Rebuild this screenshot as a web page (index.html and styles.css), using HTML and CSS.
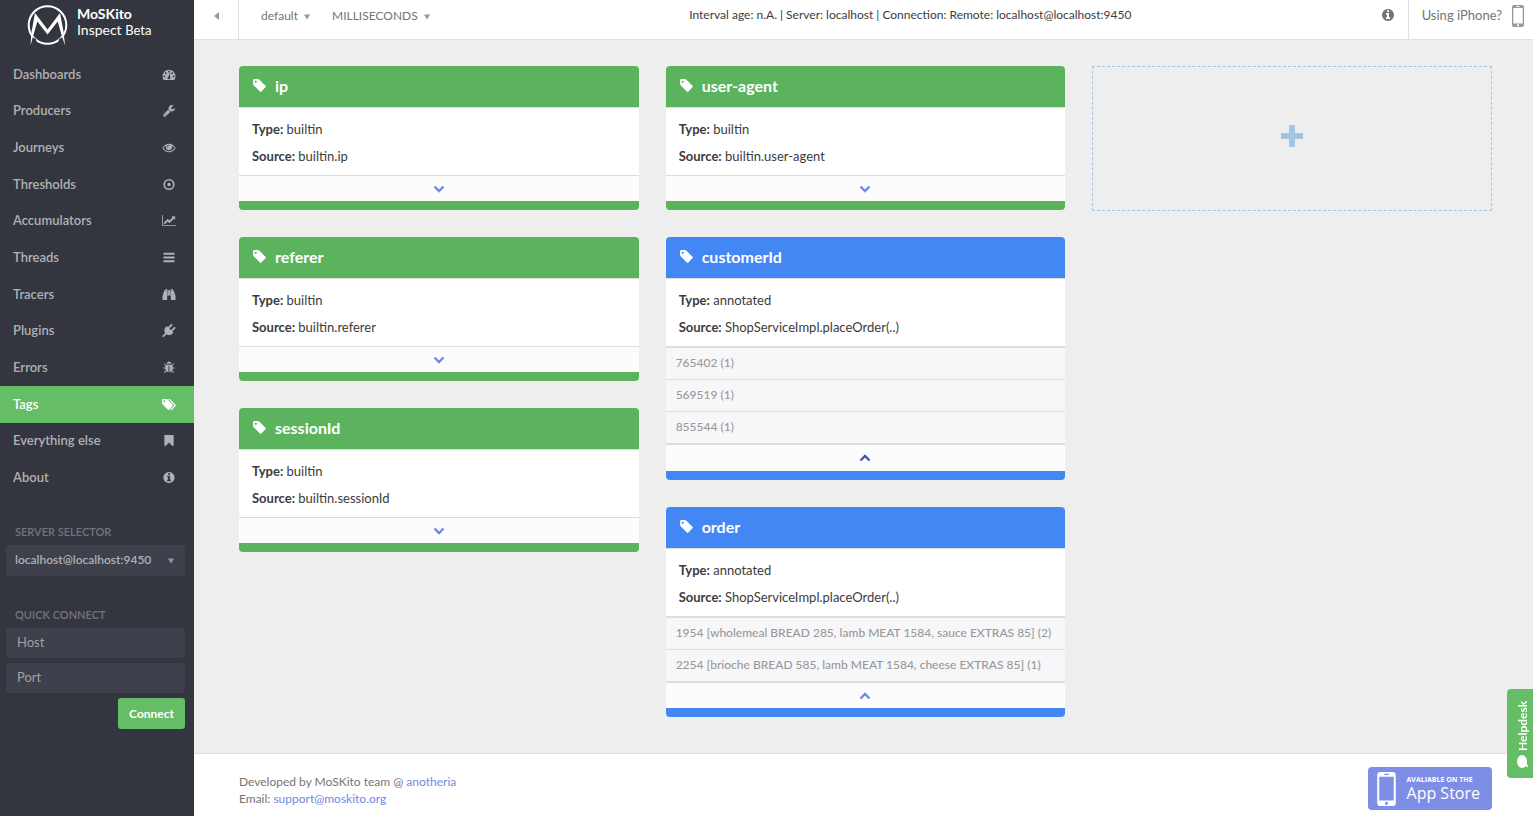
FILE: index.html
```html
<!DOCTYPE html>
<html lang="en">
<head>
<meta charset="utf-8">
<title>MoSKito Inspect</title>
<link rel="stylesheet" href="styles.css">
</head>
<body>
<svg class="sprite" aria-hidden="true">
  <symbol id="i-tag" viewBox="0 0 1792 1792"><path d="M576 448q0-53-37.500-90.500t-90.500-37.500-90.500 37.500-37.500 90.500 37.500 90.500 90.500 37.500 90.500-37.500 37.500-90.500zm1067 576q0 53-37 90l-491 492q-39 37-91 37-53 0-90-37l-715-716q-38-37-64.500-101t-26.500-117v-416q0-52 38-90t90-38h416q53 0 117 26.500t102 64.500l715 714q37 39 37 91z"/></symbol>
  <symbol id="i-tags" viewBox="0 0 1920 1792"><path d="M448 448q0-53-37.500-90.500t-90.500-37.500-90.500 37.500-37.500 90.500 37.500 90.500 90.500 37.500 90.500-37.500 37.500-90.500zm1067 576q0 53-37 90l-491 492q-39 37-91 37-53 0-90-37l-715-716q-38-37-64.500-101t-26.500-117v-416q0-52 38-90t90-38h416q53 0 117 26.500t102 64.500l715 714q37 39 37 91zm384 0q0 53-37 90l-491 492q-39 37-91 37-36 0-59-14t-53-45l470-470q37-37 37-90 0-52-37-91l-715-714q-38-38-102-64.500t-117-26.500h224q53 0 117 26.500t102 64.500l715 714q37 39 37 91z"/></symbol>
  <symbol id="i-info" viewBox="0 0 1792 1792"><path d="M1152 1376v-160q0-14-9-23t-23-9h-96v-512q0-14-9-23t-23-9h-320q-14 0-23 9t-9 23v160q0 14 9 23t23 9h96v320h-96q-14 0-23 9t-9 23v160q0 14 9 23t23 9h448q14 0 23-9t9-23zm-128-896v-160q0-14-9-23t-23-9h-192q-14 0-23 9t-9 23v160q0 14 9 23t23 9h192q14 0 23-9t9-23zm640 416q0 209-103 385.500t-279.500 279.500-385.500 103-385.500-103-279.500-279.500-103-385.500 103-385.500 279.500-279.500 385.500-103 385.500 103 279.500 279.500 103 385.500z"/></symbol>
  <symbol id="i-bookmark" viewBox="0 0 1792 1792"><path d="M1420 128q23 0 44 9 33 13 52.500 41t19.500 62v1289q0 34-19.500 62t-52.500 41q-19 8-44 8-48 0-83-32l-441-424-441 424q-36 33-83 33-23 0-44-9-33-13-52.500-41t-19.500-62v-1289q0-34 19.500-62t52.500-41q21-9 44-9h1048z"/></symbol>
  <symbol id="i-eye" viewBox="0 0 1792 1792"><path d="M1664 960q-152-236-381-353 61 104 61 225 0 185-131.500 316.500t-316.500 131.500-316.500-131.500-131.500-316.500q0-121 61-225-229 117-381 353 133 205 333.500 326.500t434.500 121.500 434.500-121.500 333.500-326.500zm-720-384q0-20-14-34t-34-14q-125 0-214.500 89.500t-89.500 214.500q0 20 14 34t34 14 34-14 14-34q0-86 61-147t147-61q20 0 34-14t14-34zm848 384q0 34-20 69-140 230-376.500 368.500t-499.500 138.500-499.500-139-376.500-368q-20-35-20-69t20-69q140-229 376.500-368t499.500-139 499.500 139 376.500 368q20 35 20 69z"/></symbol>
  <symbol id="i-dot" viewBox="0 0 1792 1792"><circle cx="896" cy="896" r="656" fill="none" stroke="currentColor" stroke-width="224"/><circle cx="896" cy="896" r="230"/></symbol>
  <symbol id="i-chart" viewBox="0 0 2048 1792"><path d="M2048 1536v128h-2048v-1536h128v1408h1920zm-128-1248v435q0 21-19.500 29.500t-35.500-7.500l-121-121-633 633q-10 10-23 10t-23-10l-233-233-416 416-192-192 585-585q10-10 23-10t23 10l233 233 464-464-121-121q-16-16-7.500-35.500t29.500-19.500h435q14 0 23 9t9 23z"/></symbol>
  <symbol id="i-bars" viewBox="0 0 1792 1792"><rect x="128" y="256" width="1536" height="256" rx="50"/><rect x="128" y="768" width="1536" height="256" rx="50"/><rect x="128" y="1280" width="1536" height="256" rx="50"/></symbol>
  <symbol id="i-binoculars" viewBox="0 0 1792 1792"><path d="M704 320v768q0 26-19 45t-45 19v448q0 26-19 45t-45 19h-512q-26 0-45-19t-19-45v-512l249-745q7-23 31-23h424zm320 0v704h-256v-704h256zm768 768v512q0 26-19 45t-45 19h-512q-26 0-45-19t-19-45v-448q-26 0-45-19t-19-45v-768h424q24 0 31 23zm-1088-928v96h-352v-96q0-14 9-23t23-9h288q14 0 23 9t9 23zm736 0v96h-352v-96q0-14 9-23t23-9h288q14 0 23 9t9 23z"/></symbol>
  <symbol id="i-wrench" viewBox="0 0 1792 1792"><path d="M448 1472q0-26-19-45t-45-19-45 19-19 45 19 45 45 19 45-19 19-45zm644-420l-682 682q-37 37-90 37-52 0-91-37l-106-108q-38-36-38-90 0-53 38-91l681-681q39 98 114.500 173.500t173.500 114.500zm634-435q0 39-23 106-47 134-164.500 217.500t-258.500 83.500q-185 0-316.500-131.500t-131.500-316.500 131.500-316.500 316.500-131.500q58 0 121.500 16.500t107.500 46.500q16 11 16 28t-16 28l-293 169v224l193 107q5-3 79-48.500t135.500-81 70.500-35.500q15 0 23.500 10t8.500 25z"/></symbol>
  <symbol id="i-gauge" viewBox="0 0 1792 1792"><path d="M384 1152q0-53-37.500-90.500t-90.500-37.500-90.500 37.500-37.500 90.500 37.500 90.500 90.500 37.500 90.500-37.500 37.500-90.500zm192-448q0-53-37.500-90.500t-90.500-37.500-90.500 37.500-37.500 90.500 37.500 90.500 90.500 37.500 90.500-37.500 37.500-90.500zm428 481l101-382q6-26-7.500-48.500t-38.500-29.500-48 6.500-30 39.500l-101 382q-60 5-107 43.500t-63 98.500q-20 77 20 146t117 89 146-20 89-117q16-60-6-117t-72-91zm660-33q0-53-37.500-90.500t-90.500-37.500-90.500 37.500-37.500 90.500 37.500 90.500 90.500 37.500 90.500-37.500 37.500-90.500zm-640-640q0-53-37.500-90.500t-90.500-37.500-90.500 37.500-37.500 90.500 37.500 90.500 90.500 37.500 90.500-37.500 37.500-90.500zm448 192q0-53-37.500-90.500t-90.500-37.500-90.500 37.500-37.500 90.500 37.500 90.500 90.500 37.500 90.500-37.500 37.500-90.500zm320 448q0 261-141 483-19 29-54 29h-1402q-35 0-54-29-141-221-141-483 0-182 71-348t191-286 286-191 348-71 348 71 286 191 191 286 71 348z"/></symbol>
  <symbol id="i-bug" viewBox="0 0 1792 1792"><path d="M1696 960q0 26-19 45t-45 19h-224q0 171-67 290l208 209q19 19 19 45t-19 45q-18 19-45 19t-45-19l-198-197q-5 5-15 13t-42 28.500-65 36.500-82 29-97 13v-896h-128v896q-51 0-101.500-13.500t-87-33-66-39-43.500-32.500l-15-14-183 207q-20 21-48 21-24 0-43-16-19-18-20.500-44.500t15.500-46.500l202-227q-58-114-58-274h-224q-26 0-45-19t-19-45 19-45 45-19h224v-294l-173-173q-19-19-19-45t19-45 45-19 45 19l173 173h844l173-173q19-19 45-19t45 19 19 45-19 45l-173 173v294h224q26 0 45 19t19 45zm-480-576h-640q0-133 93.500-226.500t226.500-93.500 226.500 93.500 93.500 226.500z"/></symbol>
  <symbol id="i-plug" viewBox="0 0 1792 1792"><path d="M1755 453q37 38 37 90.500t-37 90.500l-401 400 150 150-160 160q-163 163-389.500 186.500t-411.500-100.500l-362 362h-181v-181l362-362q-124-185-100.500-411.500t186.500-389.500l160-160 150 150 400-401q38-37 91-37t90 37 37 90.500-37 90.500l-400 401 234 234 401-400q38-37 91-37t90 37z"/></symbol>
  <symbol id="i-down" viewBox="0 0 12 12"><path d="M1.500 3.500l4.500 4.500 4.500-4.500" fill="none" stroke="currentColor" stroke-width="2.400"/></symbol>
  <symbol id="i-up" viewBox="0 0 12 12"><path d="M1.500 8.500l4.500-4.500 4.500 4.500" fill="none" stroke="currentColor" stroke-width="2.400"/></symbol>
  <symbol id="i-plus" viewBox="0 0 22 22"><path d="M9 0h4q1 0 1 1v7h7q1 0 1 1v4q0 1-1 1h-7v7q0 1-1 1h-4q-1 0-1-1v-7h-7q-1 0-1-1v-4q0-1 1-1h7v-7q0-1 1-1z"/></symbol>
  <symbol id="i-caret" viewBox="0 0 6 6"><path d="M0 .5h6l-3 5z"/></symbol>
  <symbol id="i-phone" viewBox="0 0 12 22"><path fill-rule="evenodd" d="M2 0h8q2 0 2 2v18q0 2-2 2h-8q-2 0-2-2v-18q0-2 2-2zM1.300 3v15.500h9.400v-15.500zM4.500 1.100v.8h3v-.8zM6 19.300a1 1 0 1 0 .01 0z"/></symbol>
</svg>

<div class="layout">
  <aside class="sidebar">
    <a class="brand" href="#">
      <svg class="logo" viewBox="0 0 44 44">
        <circle cx="21.500" cy="22" r="18.800" fill="none" stroke="#fff" stroke-width="2"/>
        <path fill="#34363f" d="M6 34l-3 8h8l-1-6zM37 34l3 8h-8l1-6z"/>
        <path fill="#fff" d="M9 10L21.500 26.500 34 10l3.600 19 1.400 13.500-3-9-4.300-15L21.500 31.500 11.300 18.500 7 33.500l-2.500 9L5.500 29z"/>
      </svg>
      <span class="brand-text"><strong>MoSKito</strong><span>Inspect <small>Beta</small></span></span>
    </a>
    <nav>
      <ul class="nav">
        <li><a href="#">Dashboards<svg><use href="#i-gauge"/></svg></a></li>
        <li><a href="#">Producers<svg><use href="#i-wrench"/></svg></a></li>
        <li><a href="#">Journeys<svg><use href="#i-eye"/></svg></a></li>
        <li><a href="#">Thresholds<svg><use href="#i-dot"/></svg></a></li>
        <li><a href="#">Accumulators<svg><use href="#i-chart"/></svg></a></li>
        <li><a href="#">Threads<svg><use href="#i-bars"/></svg></a></li>
        <li><a href="#">Tracers<svg><use href="#i-binoculars"/></svg></a></li>
        <li><a href="#">Plugins<svg><use href="#i-plug"/></svg></a></li>
        <li><a href="#">Errors<svg><use href="#i-bug"/></svg></a></li>
        <li><a class="active" href="#">Tags<svg><use href="#i-tags"/></svg></a></li>
        <li><a href="#">Everything else<svg><use href="#i-bookmark"/></svg></a></li>
        <li><a href="#">About<svg><use href="#i-info"/></svg></a></li>
      </ul>
    </nav>
    <div class="side-group">
      <label class="side-title" for="server">Server selector</label>
      <span class="pick server-pick">
        <select id="server"><option>localhost@localhost:9450</option></select>
        <svg><use href="#i-caret"/></svg>
      </span>
    </div>
    <form class="side-group">
      <h2 class="side-title">Quick connect</h2>
      <input type="text" placeholder="Host" aria-label="Host">
      <input type="text" placeholder="Port" aria-label="Port">
      <button class="connect" type="button">Connect</button>
    </form>
  </aside>

  <div class="page">
    <header class="topbar">
      <button class="collapse" type="button" aria-label="Collapse menu"><svg viewBox="0 0 5 8"><path d="M5 0v8l-5-4z"/></svg></button>
      <div class="picks">
        <span class="pick"><select class="interval" aria-label="Interval"><option>default</option></select><svg><use href="#i-caret"/></svg></span>
        <span class="pick"><select class="unit" aria-label="Time unit"><option>MILLISECONDS</option></select><svg><use href="#i-caret"/></svg></span>
      </div>
      <p class="status">Interval age: n.A. | Server: localhost | Connection: Remote: localhost@localhost:9450</p>
      <button class="info" type="button" aria-label="Info"><svg><use href="#i-info"/></svg></button>
      <a class="iphone" href="#">Using iPhone?<svg><use href="#i-phone"/></svg></a>
    </header>

    <main class="board">
      <div class="column">
        <section class="card">
          <h3><svg><use href="#i-tag"/></svg>ip</h3>
          <div class="facts"><p><b>Type:</b> builtin</p><p><b>Source:</b> builtin.ip</p></div>
          <button class="toggle" type="button" aria-label="Expand"><svg><use href="#i-down"/></svg></button>
        </section>
        <section class="card">
          <h3><svg><use href="#i-tag"/></svg>referer</h3>
          <div class="facts"><p><b>Type:</b> builtin</p><p><b>Source:</b> builtin.referer</p></div>
          <button class="toggle" type="button" aria-label="Expand"><svg><use href="#i-down"/></svg></button>
        </section>
        <section class="card">
          <h3><svg><use href="#i-tag"/></svg>sessionId</h3>
          <div class="facts"><p><b>Type:</b> builtin</p><p><b>Source:</b> builtin.sessionId</p></div>
          <button class="toggle" type="button" aria-label="Expand"><svg><use href="#i-down"/></svg></button>
        </section>
      </div>
      <div class="column">
        <section class="card">
          <h3><svg><use href="#i-tag"/></svg>user-agent</h3>
          <div class="facts"><p><b>Type:</b> builtin</p><p><b>Source:</b> builtin.user-agent</p></div>
          <button class="toggle" type="button" aria-label="Expand"><svg><use href="#i-down"/></svg></button>
        </section>
        <section class="card annotated">
          <h3><svg><use href="#i-tag"/></svg>customerId</h3>
          <div class="facts"><p><b>Type:</b> annotated</p><p><b>Source:</b> ShopServiceImpl.placeOrder(..)</p></div>
          <ul class="values"><li>765402 (1)</li><li>569519 (1)</li><li>855544 (1)</li></ul>
          <button class="toggle hovered" type="button" aria-label="Collapse"><svg><use href="#i-up"/></svg></button>
        </section>
        <section class="card annotated">
          <h3><svg><use href="#i-tag"/></svg>order</h3>
          <div class="facts"><p><b>Type:</b> annotated</p><p><b>Source:</b> ShopServiceImpl.placeOrder(..)</p></div>
          <ul class="values"><li>1954 [wholemeal BREAD 285, lamb MEAT 1584, sauce EXTRAS 85] (2)</li><li>2254 [brioche BREAD 585, lamb MEAT 1584, cheese EXTRAS 85] (1)</li></ul>
          <button class="toggle" type="button" aria-label="Collapse"><svg><use href="#i-up"/></svg></button>
        </section>
      </div>
      <div class="column">
        <button class="add" type="button" aria-label="Add tag"><svg><use href="#i-plus"/></svg></button>
      </div>
    </main>

    <footer class="footer">
      <p>Developed by MoSKito team @ <a href="#">anotheria</a><br>Email: <a href="#">support@moskito.org</a></p>
      <a class="store" href="#"><svg><use href="#i-phone"/></svg><span><strong>AVALIABLE ON THE</strong><span>App Store</span></span></a>
    </footer>
  </div>
</div>
<button class="helpdesk" type="button"><svg viewBox="0 0 11 13"><path transform="translate(11 0) rotate(90)" d="M6.500 0C10 0 13 2.200 13 5s-3 5-6.500 5c-.8 0-1.500-.1-2.200-.3C3.300 10.500 2 11 .6 11c.7-.7 1.100-1.400 1.200-2.300C.7 7.700 0 6.400 0 5c0-2.800 3-5 6.500-5z"/></svg>Helpdesk</button>
</body>
</html>
```
FILE: styles.css
```css
* { box-sizing: border-box; }
body {
  margin: 0;
  font: 13px/17px Lato, "Liberation Sans", sans-serif;
  color: #3c3c3c;
  background: #eee;
}
h2, h3, p, ul { margin: 0; padding: 0; }
ul { list-style: none; }
a { color: #7388e5; text-decoration: none; }
button, input, select { font: inherit; color: inherit; border: 0; margin: 0; padding: 0; background: none; }
svg { fill: currentColor; flex: none; }
.sprite { position: absolute; width: 0; height: 0; }

.layout { display: flex; min-height: 100vh; }

.sidebar { flex: none; width: 194px; background: #34363f; color: #b0b1b5; }
.brand { display: flex; gap: 7px; padding: 3px 0 0 26px; height: 56px; color: #fff; }
.logo { width: 44px; height: 44px; }
.brand-text { display: flex; flex-direction: column; padding-top: 3px; font-size: 14px; line-height: 16px; }
.brand-text small { font-size: 13px; }
.nav { display: grid; grid-auto-rows: 1fr; height: 440px; }
.nav a { display: flex; align-items: center; justify-content: space-between; height: 100%; padding: 0 18px 0 13px; color: inherit; font-weight: 600; }
.nav svg { width: 14px; height: 13px; }
.nav a.active { background: #65bd65; color: #fff; }
.side-group { display: flex; flex-direction: column; gap: 5px; padding: 28px 9px 0 6px; }
.side-group + .side-group { padding-top: 31px; }
.side-title { padding-left: 9px; font-size: 11px; line-height: 16px; font-weight: 600; text-transform: uppercase; color: #74757b; }
.side-group input { height: 30px; padding: 0 11px 2px; border-radius: 4px; background: #3e404b; }
.side-group input::placeholder { color: #a0a1a6; opacity: 1; }
.connect { align-self: flex-end; height: 31px; padding: 0 11px; border-radius: 3px; background: #65bd65; color: #fff; font-size: 12px; font-weight: 700; }

.pick { display: flex; align-items: center; gap: 6px; }
.pick select { appearance: none; }
.pick svg { width: 6px; height: 6px; margin-top: 3px; color: #999; }
.server-pick { height: 31px; padding: 0 11px 2px 9px; border-radius: 4px; background: #3e404b; font-size: 12px; }
.server-pick select { flex: 1; min-width: 0; font-weight: 600; }

.page { flex: 1; min-width: 0; display: flex; flex-direction: column; }
.topbar { display: flex; height: 40px; background: #fff; border-bottom: 1px solid #e0e0e0; color: #757575; }
.collapse { width: 45px; padding: 0 0 8px; border-right: 1px solid #e0e0e0; color: #999; }
.collapse svg { width: 5px; height: 8px; }
.picks { display: flex; gap: 22px; padding: 0 0 8px 22px; font-size: 12px; }
.status { flex: 1; padding: 6px 0 0 10px; text-align: center; font-size: 12px; color: #3c3c3c; }
.info { display: flex; padding: 8px 13px 0 0; }
.info svg { width: 14px; height: 14px; }
.iphone { display: flex; align-items: center; gap: 10px; padding: 0 9px 8px 13px; border-left: 1px solid #e0e0e0; color: #757575; }
.iphone svg { width: 12px; height: 22px; color: #999; }

.board { display: grid; grid-template-columns: repeat(3, minmax(0, 1fr)); gap: 27px; padding: 26px 41px 36px 45px; }
.column { display: flex; flex-direction: column; gap: 27px; }
.card { border-radius: 4px; border-bottom: 9px solid #5bb45d; background: #fff; overflow: hidden; }
.card h3 { display: flex; align-items: center; gap: 8px; height: 42px; padding: 0 13px 2px; border-bottom: 1px solid #ddd; background: #5bb45d; color: #fff; font-size: 16px; line-height: 22px; }
.card h3 svg { width: 15px; height: 15px; }
.card.annotated { border-bottom-color: #4287f4; }
.annotated h3 { background: #4287f4; }
.facts { padding: 8px 13px 5px; line-height: 27px; }
.values { border: solid #ddd; border-width: 2px 0 1px; background: #f7f7f9; font-size: 12px; line-height: 29px; color: #999; }
.values li { padding: 0 10px 2px; font-weight: 500; }
.values li + li { border-top: 1px solid #ddd; }
.toggle { display: flex; align-items: center; justify-content: center; width: 100%; height: 26px; border-top: 1px solid #ddd; background: #fcfcfc; color: #7388e5; }
.toggle svg { width: 12px; height: 12px; }
.toggle.hovered { color: #4459ac; height: 27px; }
.add { display: flex; align-items: center; justify-content: center; height: 145px; padding-bottom: 6px; border: 1px dashed #a3c4e2; color: #a3c4e2; }
.add svg { width: 22px; height: 22px; }

.footer { display: flex; justify-content: space-between; margin-top: auto; height: 63px; padding: 13px 41px 0 45px; border-top: 1px solid #ddd; background: #fff; color: #757575; }
.footer p { padding-top: 6px; font-size: 12px; }
.store { display: flex; gap: 11px; height: 43px; padding: 5px 12px 0 9px; border-radius: 4px; background: #7e8ee6; color: #fff; font-family: "Open Sans", sans-serif; }
.store svg { width: 19px; height: 34px; }
.store > span { display: flex; flex-direction: column; padding-top: 3px; font-size: 16px; line-height: 18px; }
.store strong { font-size: 7px; line-height: 9px; }

.helpdesk { position: fixed; right: 0; bottom: 38px; display: flex; align-items: center; gap: 4px; width: 26px; height: 89px; padding: 10px 8px 10px 2px; border-radius: 0 4px 4px 0; background: #65bd65; color: #fff; font-size: 12px; font-weight: 700; writing-mode: vertical-rl; transform: rotate(180deg); }
.helpdesk svg { width: 11px; height: 13px; }
```
